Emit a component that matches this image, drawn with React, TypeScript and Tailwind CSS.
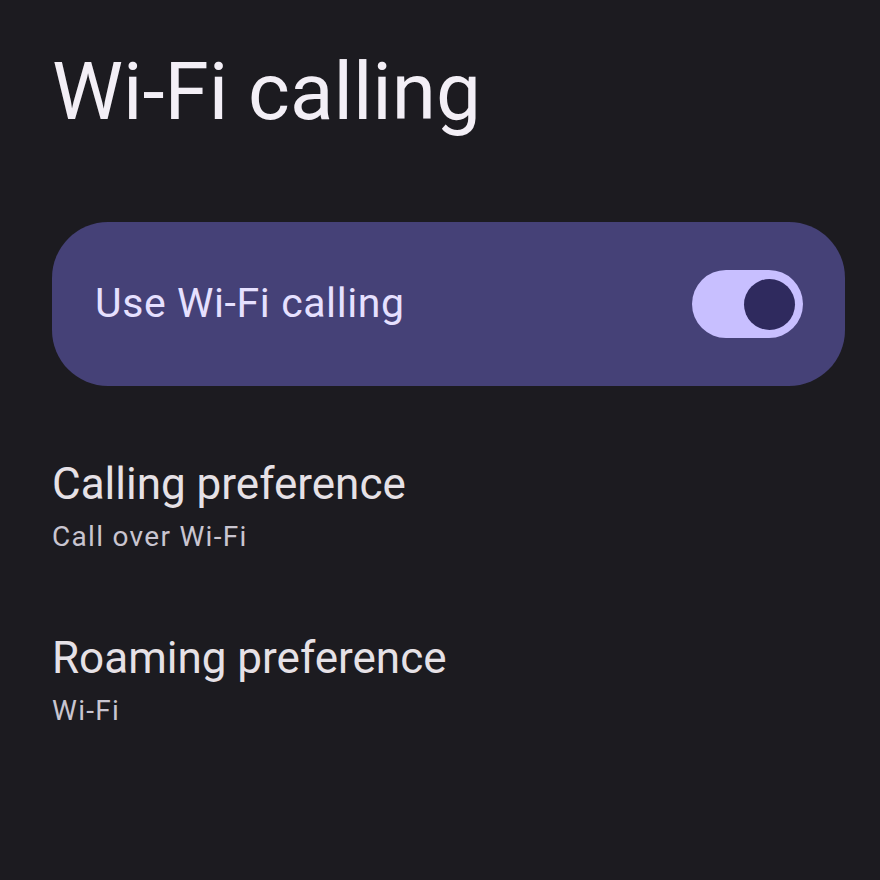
import React from "react";

const font = { fontFamily: "Roboto, 'Open Sans', sans-serif" };

function Toggle() {
  return (
    <div className="flex h-[68px] w-[111px] items-center justify-end rounded-full bg-[#c8bfff] pr-[8px]">
      <div className="h-[51px] w-[51px] rounded-full bg-[#2f2a5e]" />
    </div>
  );
}

function PrefRow({ title, value }: { title: string; value: string }) {
  return (
    <div className="flex flex-col">
      <div className="text-[44px] leading-[52px] text-[#e6e1e6]">{title}</div>
      <div className="mt-[9px] text-[28px] leading-[36px] tracking-[1.3px] text-[#c9c5d0]">{value}</div>
    </div>
  );
}

export default function App() {
  return (
    <div className="h-[880px] w-[880px] bg-[#1c1b20] pl-[52px] pr-[35px]" style={font}>
      <div className="pt-[44px] text-[80px] leading-[96px] text-[#f3eff6]">Wi-Fi calling</div>
      <div className="mt-[82px] flex h-[164px] items-center justify-between rounded-[56px] bg-[#454177] pl-[43px] pr-[42px]">
        <span className="text-[41px] tracking-[0.6px] text-[#e6e0ff]">Use Wi-Fi calling</span>
        <Toggle />
      </div>
      <div className="mt-[72px] flex flex-col gap-[77px]">
        <PrefRow title="Calling preference" value="Call over Wi-Fi" />
        <PrefRow title="Roaming preference" value="Wi-Fi" />
      </div>
    </div>
  );
}
